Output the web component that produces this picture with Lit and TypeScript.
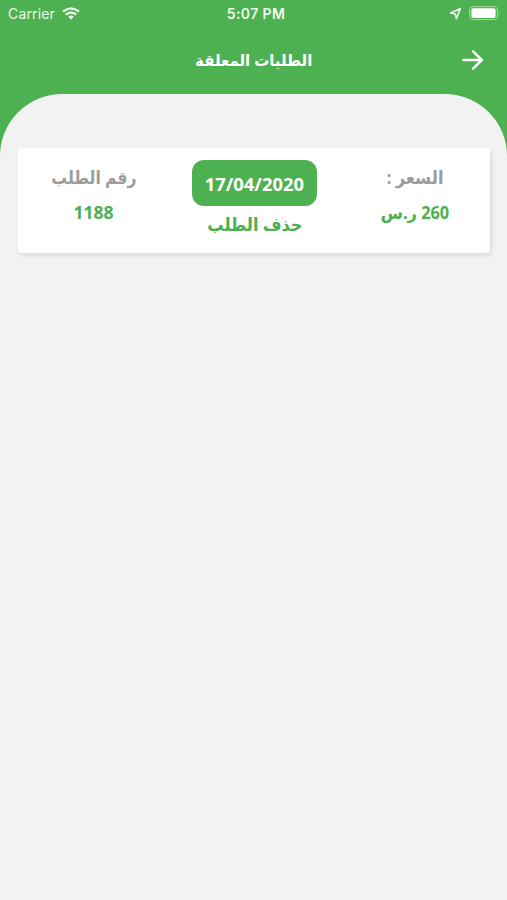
import { LitElement, html, css } from "lit";
import { customElement } from "lit/decorators.js";

@customElement("app-root")
export class AppRoot extends LitElement {
  static styles = css`
    :host {
      display: flex;
      flex-direction: column;
      height: 900px;
      overflow: hidden;
      background: linear-gradient(#4db151 0 190px, #f2f2f2 190px);
      font-family: "Noto Sans", "DejaVu Sans", sans-serif;
      color: #fff;
    }
    .status {
      display: grid;
      grid-template-columns: 1fr auto 1fr;
      align-items: center;
      height: 27px;
      padding: 0 6px 0 11px;
      box-sizing: border-box;
      font-family: Inter, sans-serif;
      font-size: 14px;
      line-height: 27px;
      color: #effbea;
    }
    .left { display: flex; align-items: center; gap: 7px; margin-left: -3px; letter-spacing: 0.15px; }
    .time { font-weight: 600; font-size: 14px; letter-spacing: 0.4px; }
    .right { display: flex; align-items: center; justify-content: flex-end; gap: 7px; }
    .bar {
      display: grid;
      grid-template-columns: 60px 1fr 60px;
      align-items: center;
      height: 67px;
      direction: rtl;
    }
    .back { display: flex; padding: 0 22px 2px 0; }
    .title { text-align: center; font-size: 16px; font-weight: 700; line-height: 24px; padding-bottom: 2px; }
    .fit { display: inline-block; white-space: nowrap; }
    .sheet {
      flex: 1;
      background: #f2f2f2;
      border-radius: 62px 62px 0 0;
      padding: 54px 17px 0 18px;
    }
    .card {
      display: grid;
      grid-template-columns: 150px 1fr 151px;
      height: 105px;
      background: #fff;
      border-radius: 4px;
      box-shadow: 2px 3px 4px rgba(0, 0, 0, 0.09);
      direction: rtl;
      font-weight: 700;
      font-size: 18px;
      color: #4caf50;
    }
    .col { display: flex; flex-direction: column; align-items: center; padding-top: 16px; }
    .label { color: #9c9c9c; line-height: 27px; height: 35px; }
    .value { line-height: 27px; font-size: 17px; }
    .mid { padding-top: 12px; }
    .date {
      width: 125px;
      height: 46px;
      border-radius: 12px;
      background: #4db151;
      color: #fff;
      font-size: 17.5px;
      text-align: center;
      line-height: 48px;
      margin-bottom: 5px;
    }
    .remove { line-height: 26px; }
    .t-title { transform: scaleX(0.935); }
    .t-price { transform: scaleX(0.91); }
    .t-number { transform: scaleX(0.87); }
    .t-sum { transform: scaleX(0.96); }
    .t-date { transform: scaleX(1.05); }
    .t-remove { transform: scaleX(0.9); }
    .t-id { transform: scaleX(1.03); }
  `;

  render() {
    return html`
      <div class="status">
        <div class="left">
          <span>Carrier</span>
          <svg width="18" height="13" viewBox="0 0 18 13" fill="none" stroke="#effbea" stroke-width="2.3">
            <path d="M1 4.7Q9-2 17 4.7M3.8 7.7Q9 3.2 14.2 7.7" />
            <path d="M6.2 9.7Q9 7.3 11.8 9.7L9 12.6Z" fill="#effbea" stroke="none" />
          </svg>
        </div>
        <div class="time">5:07 PM</div>
        <div class="right">
          <svg width="13" height="13" viewBox="0 0 13 13" fill="none" stroke="#effbea" stroke-width="1.6" stroke-linejoin="round">
            <path d="M11.5 1.4L1.5 5.9L6.3 7L7.4 11.6Z" />
          </svg>
          <svg width="32" height="15" viewBox="0 0 32 15">
            <rect x="0.6" y="0.6" width="27.8" height="13" rx="3.5" fill="none" stroke="#a4d8a2" />
            <rect x="2.4" y="2.2" width="24.2" height="9.8" rx="2" fill="#fff" />
            <path d="M29.8 5Q31.6 7.1 29.8 9.2Z" fill="#a4d8a2" />
          </svg>
        </div>
      </div>
      <div class="bar">
        <div class="back">
          <svg width="24" height="24" viewBox="0 0 24 24" fill="none" stroke="#fff" stroke-width="2.6" stroke-linecap="round" stroke-linejoin="round">
            <path d="M2.5 12H20.6M12.1 3.4L20.8 12L12.1 20.6" />
          </svg>
        </div>
        <div class="title"><span class="fit t-title">الطلبات المعلقة</span></div>
      </div>
      <div class="sheet">
        <div class="card">
          <div class="col">
            <div class="label"><span class="fit t-price">السعر :</span></div>
            <div class="value"><span class="fit t-sum">260 ر.س</span></div>
          </div>
          <div class="col mid">
            <div class="date"><span class="fit t-date">17/04/2020</span></div>
            <div class="remove"><span class="fit t-remove">حذف الطلب</span></div>
          </div>
          <div class="col">
            <div class="label"><span class="fit t-number">رقم الطلب</span></div>
            <div class="value"><span class="fit t-id">1188</span></div>
          </div>
        </div>
      </div>
    `;
  }
}
